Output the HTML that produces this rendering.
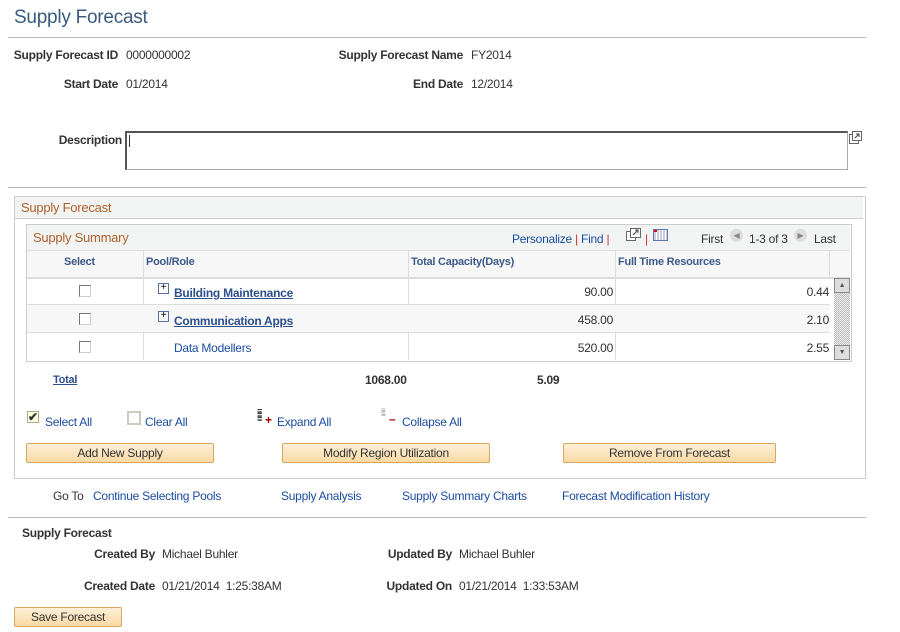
<!DOCTYPE html>
<html><head><style>
body{margin:0;width:900px;height:632px;background:#fff;font-family:"Liberation Sans",Arial,sans-serif;font-size:12px;color:#333;position:relative;overflow:hidden;letter-spacing:-0.25px}
.a{position:absolute;white-space:nowrap}
.lb{font-weight:bold;color:#333;text-align:right}
.lk{color:#1b4ca0}
.ln{position:absolute;height:1px;background:#bbb}
.btn{position:absolute;height:18px;border:1px solid #d8a760;border-radius:2px;background:linear-gradient(#fdf0d8,#f9d9a4);text-align:center;line-height:18px;color:#333}
.cb{position:absolute;width:10px;height:10px;border:1px solid #777;border-right-color:#ccc;border-bottom-color:#ccc;background:#fff}
.v{position:absolute;width:1px;background:#ddd}
.h{position:absolute;height:1px;background:#ddd}
.plus{position:absolute;width:9px;height:9px;border:1px solid #5570a0;font-size:10px;line-height:8px;text-align:center;color:#000}
</style></head><body>
<div class="a" style="left:14px;top:7px;font-size:19px;color:#3a5a80">Supply Forecast</div>
<div class="ln" style="left:8px;top:37px;width:858px"></div>

<div class="a lb" style="right:782px;top:48px">Supply Forecast ID</div>
<div class="a" style="left:126px;top:48px">0000000002</div>
<div class="a lb" style="right:437px;top:48px">Supply Forecast Name</div>
<div class="a" style="left:471px;top:48px">FY2014</div>
<div class="a lb" style="right:782px;top:77px">Start Date</div>
<div class="a" style="left:126px;top:77px">01/2014</div>
<div class="a lb" style="right:437px;top:77px">End Date</div>
<div class="a" style="left:471px;top:77px">12/2014</div>
<div class="a lb" style="right:778px;top:133px">Description</div>
<div class="a" style="left:125px;top:131px;width:720px;height:36px;border:1px solid #aaa;border-top:2px solid #555;border-left:2px solid #555"></div>
<div class="a" style="left:129px;top:135px;width:1px;height:12px;background:#333"></div>
<svg class="a" style="left:849px;top:131px" width="14" height="14"><rect x="0.5" y="3.5" width="9" height="9" fill="#fff" stroke="#666"/><rect x="3.5" y="0.5" width="9" height="9" fill="#fff" stroke="#666"/><path d="M6 7L10 3M7 3h3v3" stroke="#444" fill="none"/></svg>
<div class="ln" style="left:8px;top:187px;width:858px"></div>

<div class="a" style="left:14px;top:196px;width:850px;height:281px;border:1px solid #ccc"></div>
<div class="a" style="left:15px;top:197px;width:848px;height:21px;background:#f2f4f4;border-bottom:1px solid #ccc"></div>
<div class="a" style="left:21px;top:200px;font-size:13px;color:#b0602a">Supply Forecast</div>

<div class="a" style="left:26px;top:224px;width:824px;height:136px;border:1px solid #ccc;background:#fff"></div>
<div class="a" style="left:27px;top:225px;width:823px;height:25px;background:#f2f4f4"></div>
<div class="a" style="left:33px;top:230px;font-size:13px;color:#b0602a">Supply Summary</div>
<div class="a lk" style="left:512px;top:232px">Personalize <span style="color:#c33">|</span> Find <span style="color:#c33">|</span></div>
<svg class="a" style="left:626px;top:228px" width="15" height="13"><rect x="0.5" y="3.5" width="9" height="9" fill="#fff" stroke="#666"/><rect x="4.5" y="0.5" width="10" height="9" fill="#fff" stroke="#666"/><path d="M7 7L12 2M9 2h3v3" stroke="#444" fill="none"/></svg>
<div class="a" style="left:645px;top:232px;color:#c33">|</div>
<div class="a" style="left:653px;top:229px;width:13px;height:10px;border:1px solid #5a7ab0;background:repeating-linear-gradient(90deg,#ccd 0 2px,#fff 2px 3px)"></div>
<div class="a" style="left:654px;top:230px;width:3px;height:2px;background:#e00"></div>
<div class="a" style="left:701px;top:232px">First</div>
<div class="a" style="left:730px;top:229px;width:13px;height:13px;border-radius:50%;background:#ddd;font-size:8px;line-height:13px;text-align:center;color:#888">◀</div>
<div class="a" style="left:749px;top:232px">1-3 of 3</div>
<div class="a" style="left:794px;top:229px;width:13px;height:13px;border-radius:50%;background:#ddd;font-size:8px;line-height:13px;text-align:center;color:#888">▶</div>
<div class="a" style="left:814px;top:232px">Last</div>

<div class="a" style="left:27px;top:250px;width:823px;height:26px;background:#f7f7f7;border-top:1px solid #ddd;border-bottom:2px solid #ddd"></div>
<div class="a" style="left:64px;top:256px;font-weight:bold;font-size:11px;color:#3d5a8a">Select</div>
<div class="a" style="left:146px;top:256px;font-weight:bold;font-size:11px;color:#3d5a8a">Pool/Role</div>
<div class="a" style="left:411px;top:256px;font-weight:bold;font-size:11px;color:#3d5a8a">Total Capacity(Days)</div>
<div class="a" style="left:618px;top:256px;font-weight:bold;font-size:11px;color:#3d5a8a">Full Time Resources</div>
<div class="v" style="left:143px;top:250px;height:110px"></div>
<div class="v" style="left:408px;top:250px;height:110px"></div>
<div class="v" style="left:615px;top:250px;height:110px"></div>
<div class="v" style="left:829px;top:250px;height:28px"></div>
<div class="a" style="left:27px;top:305px;width:803px;height:27px;background:#f7f7f7"></div>
<div class="h" style="left:27px;top:304px;width:803px"></div>
<div class="h" style="left:27px;top:332px;width:803px"></div>
<div class="cb" style="left:79px;top:285px"></div>
<div class="cb" style="left:79px;top:313px"></div>
<div class="cb" style="left:79px;top:341px"></div>
<div class="plus" style="left:158px;top:283px">+</div>
<div class="plus" style="left:158px;top:311px">+</div>
<div class="a lk" style="left:174px;top:286px;font-weight:bold;text-decoration:underline;color:#2d4f8e">Building Maintenance</div>
<div class="a lk" style="left:174px;top:314px;font-weight:bold;text-decoration:underline;color:#2d4f8e">Communication Apps</div>
<div class="a lk" style="left:174px;top:341px">Data Modellers</div>
<div class="a" style="right:287px;top:285px">90.00</div>
<div class="a" style="right:287px;top:313px">458.00</div>
<div class="a" style="right:287px;top:341px">520.00</div>
<div class="a" style="right:71px;top:285px">0.44</div>
<div class="a" style="right:71px;top:313px">2.10</div>
<div class="a" style="right:71px;top:341px">2.55</div>
<div class="a" style="left:834px;top:278px;width:16px;height:82px;background:repeating-conic-gradient(#bbb 0 25%,#eee 0 50%) 0 0/2px 2px"></div>
<div class="a" style="left:834px;top:278px;width:14px;height:13px;background:#ddd;border:1px solid #888;font-size:7px;text-align:center;line-height:13px;color:#555">▲</div>
<div class="a" style="left:834px;top:345px;width:14px;height:13px;background:#ddd;border:1px solid #888;font-size:7px;text-align:center;line-height:13px;color:#555">▼</div>

<div class="a" style="left:53px;top:374px;font-weight:bold;font-size:11px;color:#2d4f8e;text-decoration:underline">Total</div>
<div class="a" style="left:365px;top:373px;font-weight:bold;font-size:12px">1068.00</div>
<div class="a" style="left:537px;top:373px;font-weight:bold;font-size:12px">5.09</div>

<div class="a" style="left:27px;top:411px;width:10px;height:10px;border:1px solid #aa9;background:#ffd;font-size:12px;line-height:10px;font-weight:bold">✔</div>
<div class="a lk" style="left:45px;top:415px">Select All</div>
<div class="a" style="left:127px;top:411px;width:10px;height:10px;border:2px solid #ccb;background:#fff"></div>
<div class="a lk" style="left:145px;top:415px">Clear All</div>
<div class="a" style="left:257px;top:409px;font-size:9px;line-height:4px;color:#000">≡<br>≡<br>≡</div>
<div class="a" style="left:265px;top:413px;color:#900;font-weight:bold">+</div>
<div class="a lk" style="left:277px;top:415px">Expand All</div>
<div class="a" style="left:381px;top:409px;font-size:8px;line-height:4px;color:#888">≡<br>≡</div>
<div class="a" style="left:389px;top:412px;color:#900;font-weight:bold">–</div>
<div class="a lk" style="left:402px;top:415px">Collapse All</div>

<div class="btn" style="left:26px;top:443px;width:186px">Add New Supply</div>
<div class="btn" style="left:282px;top:443px;width:206px">Modify Region Utilization</div>
<div class="btn" style="left:563px;top:443px;width:211px">Remove From Forecast</div>

<div class="a" style="left:53px;top:489px">Go To</div>
<div class="a lk" style="left:93px;top:489px">Continue Selecting Pools</div>
<div class="a lk" style="left:281px;top:489px">Supply Analysis</div>
<div class="a lk" style="left:402px;top:489px">Supply Summary Charts</div>
<div class="a lk" style="left:562px;top:489px">Forecast Modification History</div>
<div class="ln" style="left:8px;top:517px;width:858px"></div>

<div class="a" style="left:22px;top:526px;font-weight:bold">Supply Forecast</div>
<div class="a lb" style="right:745px;top:547px">Created By</div>
<div class="a" style="left:162px;top:547px">Michael Buhler</div>
<div class="a lb" style="right:448px;top:547px">Updated By</div>
<div class="a" style="left:459px;top:547px">Michael Buhler</div>
<div class="a lb" style="right:745px;top:579px">Created Date</div>
<div class="a" style="left:162px;top:579px">01/21/2014&nbsp; 1:25:38AM</div>
<div class="a lb" style="right:448px;top:579px">Updated On</div>
<div class="a" style="left:459px;top:579px">01/21/2014&nbsp; 1:33:53AM</div>
<div class="btn" style="left:14px;top:607px;width:106px">Save Forecast</div>
</body></html>
